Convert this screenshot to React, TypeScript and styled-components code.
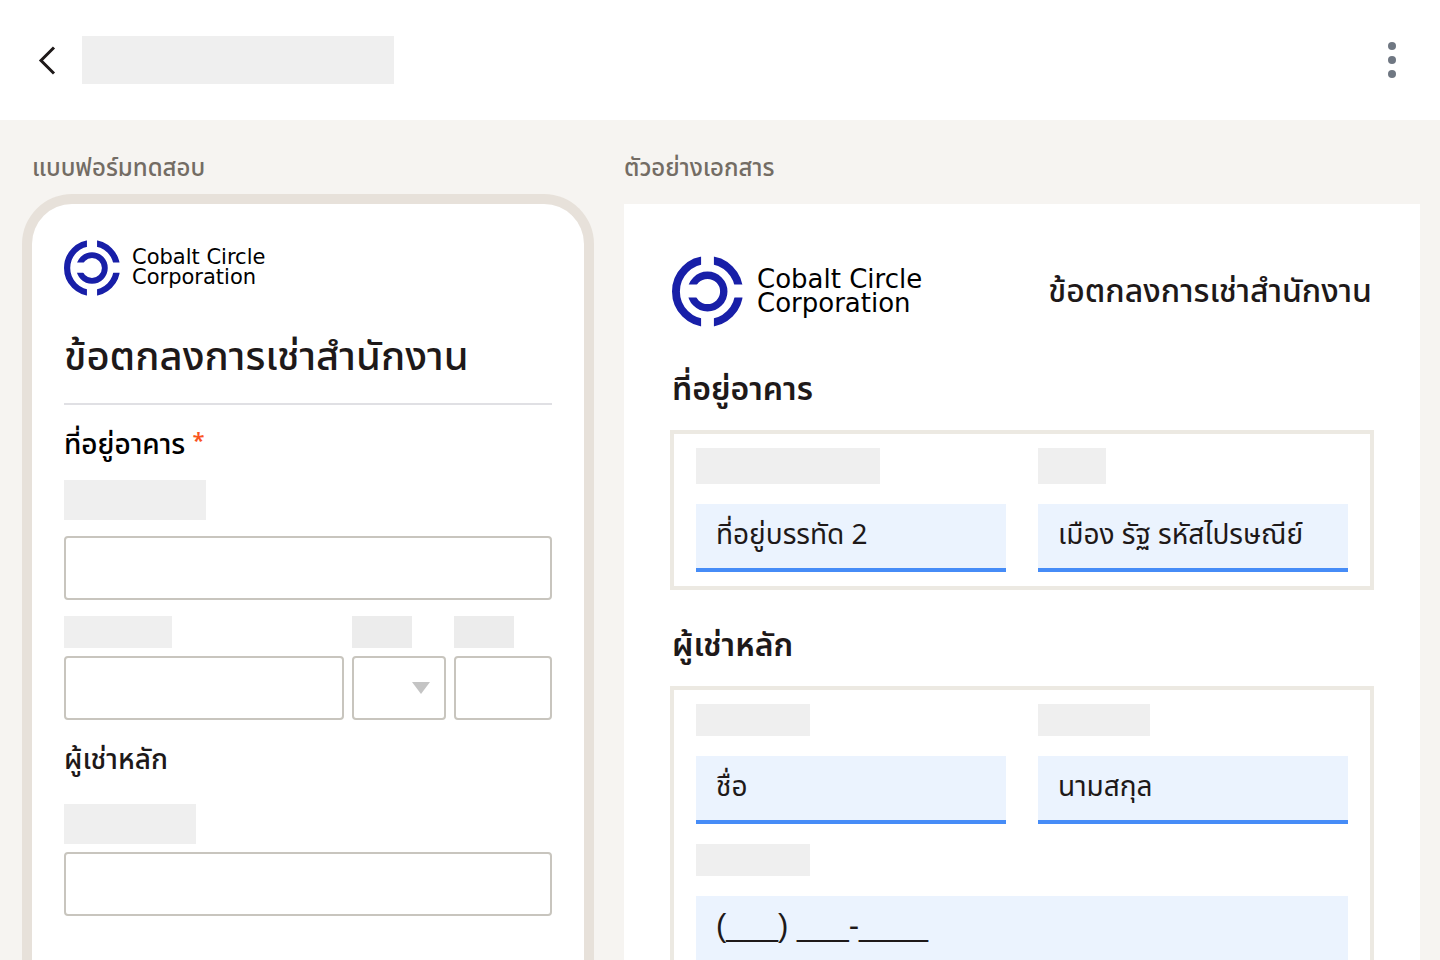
import React from 'react';
import styled, { createGlobalStyle } from 'styled-components';

const GlobalStyle = createGlobalStyle`
  *, *::before, *::after { box-sizing: border-box; }
  body {
    margin: 0;
    background: #f6f4f1;
    color: #1e1919;
    font-family: 'Noto Sans Thai', 'Noto Sans', sans-serif;
  }
`;

const Shell = styled.div`
  display: flex;
  flex-direction: column;
  height: 100vh;
`;

const TopBar = styled.header`
  flex: none;
  display: flex;
  align-items: center;
  height: 120px;
  padding: 0 40px 0 32px;
  background: #fff;
`;

const IconButton = styled.button`
  display: flex;
  align-items: center;
  justify-content: center;
  height: 48px;
  padding: 0;
  border: 0;
  background: none;
  cursor: pointer;
`;

const BackButton = styled(IconButton)`
  width: 32px;
  margin-right: 18px;
`;

const MenuButton = styled(IconButton)`
  width: 16px;
  margin-left: auto;
`;

const Block = styled.div<{ $w: number; $h: number }>`
  width: ${(p) => p.$w}px;
  max-width: 100%;
  height: ${(p) => p.$h}px;
  background: #efefef;
`;

const BlockLabel = styled.label<{ $w: number; $h: number; $gap: number; $dark?: boolean }>`
  display: block;
  width: ${(p) => p.$w}px;
  max-width: 100%;
  height: ${(p) => p.$h}px;
  margin-bottom: ${(p) => p.$gap}px;
  background: ${(p) => (p.$dark ? '#ececec' : '#efefef')};
`;

const Workspace = styled.main`
  flex: 1;
  min-height: 0;
  display: grid;
  grid-template-columns: minmax(0, 572fr) minmax(0, 796fr);
  gap: 30px;
  padding: 32px 20px 0 22px;
  overflow: auto;
  scrollbar-width: none;
`;

const Column = styled.section`
  display: flex;
  flex-direction: column;
`;

const ColumnTitle = styled.h2<{ $indent?: boolean }>`
  margin: 0;
  padding-left: ${(p) => (p.$indent ? 10 : 0)}px;
  font-size: 24px;
  line-height: 34px;
  font-weight: 500;
  color: #736c64;
`;

const Phone = styled.form`
  flex: 1;
  margin-top: 8px;
  padding: 36px 32px 48px;
  border: 10px solid #e7e1da;
  border-bottom: 0;
  border-radius: 50px 50px 0 0;
  background: #fff;
`;

const Sheet = styled.form`
  flex: 1;
  margin-top: 18px;
  padding: 52px 46px 0;
  background: #fff;
`;

const Brand = styled.div<{ $large?: boolean }>`
  display: flex;
  align-items: center;
  gap: ${(p) => (p.$large ? 14 : 12)}px;
  color: #000;
  font-family: 'DejaVu Sans', sans-serif;
  font-size: ${(p) => (p.$large ? 26 : 21)}px;
  line-height: ${(p) => (p.$large ? 24 : 20)}px;
  white-space: nowrap;

  svg {
    flex: none;
    width: ${(p) => (p.$large ? 71 : 56)}px;
    height: ${(p) => (p.$large ? 71 : 56)}px;
  }
`;

const BrandName = styled.div`
  padding-bottom: 2px;
`;

const BrandLine = styled.div``;

const FormTitle = styled.h1`
  margin: 32px 0 0;
  padding-bottom: 15px;
  border-bottom: 2px solid #e0e0e4;
  font-size: 40px;
  line-height: 60px;
  font-weight: 500;
`;

const FormHeading = styled.h3<{ $gap: number; $strong?: boolean }>`
  margin: 21px 0 ${(p) => p.$gap}px;
  font-size: 28px;
  line-height: 40px;
  font-weight: 500;
  color: ${(p) => (p.$strong ? '#000' : '#1e1919')};
`;

const Required = styled.span`
  color: #fa551e;
  font-size: 22px;
  line-height: 1;
  font-weight: 600;
  vertical-align: 6px;
`;

const TextInput = styled.input`
  display: block;
  width: 100%;
  height: 64px;
  padding: 0 16px;
  border: 2px solid #c8c5be;
  border-radius: 4px;
  background: #fff;
  font: inherit;
  font-size: 28px;
`;

const SelectWrap = styled.div`
  display: grid;
  align-items: center;

  > * { grid-area: 1 / 1; }

  svg {
    justify-self: end;
    margin-right: 16px;
    pointer-events: none;
  }
`;

const Select = styled.select`
  width: 100%;
  height: 64px;
  padding: 0 16px;
  border: 2px solid #c8c5be;
  border-radius: 4px;
  background: #fff;
  font: inherit;
  appearance: none;
`;

const CityRow = styled.div`
  display: grid;
  grid-template-columns: minmax(0, 280fr) minmax(0, 94fr) minmax(0, 98fr);
  gap: 8px;
  margin-top: 16px;
`;

const SheetHeader = styled.div`
  display: flex;
  align-items: center;
  justify-content: space-between;
  padding: 0 2px 7px;
`;

const SheetTitle = styled.h1`
  margin: 0;
  font-size: 32px;
  line-height: 48px;
  font-weight: 500;
`;

const SheetHeading = styled.h3`
  margin: 32px 0 16px;
  padding-left: 2px;
  font-size: 32px;
  line-height: 48px;
  font-weight: 600;
`;

const FieldBox = styled.div`
  display: grid;
  grid-template-columns: 1fr 1fr;
  gap: 20px 32px;
  padding: 14px 22px;
  border: 4px solid #ece9e2;
`;

const Cell = styled.div<{ $wide?: boolean }>`
  grid-column: ${(p) => (p.$wide ? '1 / -1' : 'auto')};
  min-width: 0;
`;

const FilledInput = styled.input`
  display: block;
  width: 100%;
  height: 68px;
  padding: 0 20px 2px;
  border: 0;
  border-bottom: 4px solid #468cf7;
  border-radius: 0;
  background: #ebf3fe;
  color: #1e1919;
  font: inherit;
  font-size: 28px;
`;

const MaskInput = styled(FilledInput)`
  padding-bottom: 4px;
  font-family: 'Liberation Sans', sans-serif;
  font-size: 31px;
`;

function Logo() {
  return (
    <svg viewBox="0 0 72 72" aria-hidden="true">
      <defs>
        <clipPath id="ring-gaps">
          <path d="M0 0H29.5V72H0ZM42.5 0H72V29H42.5ZM42.5 42H72V72H42.5Z" />
        </clipPath>
        <clipPath id="core-gap">
          <path d="M10 10H62V62H10V42H36V29H10Z" />
        </clipPath>
      </defs>
      <circle cx="36" cy="36" r="32" fill="none" stroke="#181fa8" strokeWidth="8" clipPath="url(#ring-gaps)" />
      <circle cx="36" cy="36" r="16.5" fill="none" stroke="#181fa8" strokeWidth="7.5" clipPath="url(#core-gap)" />
    </svg>
  );
}

function BrandMark({ large }: { large?: boolean }) {
  return (
    <Brand $large={large}>
      <Logo />
      <BrandName>
        <BrandLine>Cobalt Circle</BrandLine>
        <BrandLine>Corporation</BrandLine>
      </BrandName>
    </Brand>
  );
}

type FieldProps = {
  id: string;
  name: string;
  w: number;
  h: number;
  gap: number;
};

function FormField({ id, name, w, h, gap, dark }: FieldProps & { dark?: boolean }) {
  return (
    <div>
      <BlockLabel htmlFor={id} $w={w} $h={h} $gap={gap} $dark={dark} />
      <TextInput id={id} aria-label={name} />
    </div>
  );
}

type SheetFieldProps = FieldProps & { value: string; wide?: boolean; mask?: boolean };

function SheetField({ id, name, value, w, h, gap, wide, mask }: SheetFieldProps) {
  const Input = mask ? MaskInput : FilledInput;
  return (
    <Cell $wide={wide}>
      <BlockLabel htmlFor={id} $w={w} $h={h} $gap={gap} />
      <Input id={id} aria-label={name} defaultValue={value} />
    </Cell>
  );
}

export default function App() {
  return (
    <Shell>
      <GlobalStyle />
      <TopBar>
        <BackButton type="button" aria-label="ย้อนกลับ">
          <svg width="32" height="32" viewBox="0 0 32 32" fill="none" stroke="#1e1919" strokeWidth="3">
            <path d="M22 3.5L9 16.5L22 29.5" />
          </svg>
        </BackButton>
        <Block $w={312} $h={48} />
        <MenuButton type="button" aria-label="เมนู">
          <svg width="16" height="40" viewBox="0 0 16 40" fill="#6f7782">
            <circle cx="8" cy="6" r="4" />
            <circle cx="8" cy="20" r="4" />
            <circle cx="8" cy="34" r="4" />
          </svg>
        </MenuButton>
      </TopBar>
      <Workspace>
        <Column>
          <ColumnTitle $indent>แบบฟอร์มทดสอบ</ColumnTitle>
          <Phone>
            <BrandMark />
            <FormTitle>ข้อตกลงการเช่าสำนักงาน</FormTitle>
            <FormHeading $gap={14} $strong>
              ที่อยู่อาคาร <Required>*</Required>
            </FormHeading>
            <FormField id="street" name="ที่อยู่" w={142} h={40} gap={16} />
            <CityRow>
              <FormField id="city" name="เมือง" w={108} h={32} gap={8} />
              <div>
                <BlockLabel htmlFor="state" $w={60} $h={32} $gap={8} $dark />
                <SelectWrap>
                  <Select id="state" aria-label="รัฐ" />
                  <svg width="18" height="12" viewBox="0 0 18 12" fill="#c4c4c4">
                    <path d="M0 0H18L9 12Z" />
                  </svg>
                </SelectWrap>
              </div>
              <FormField id="zip" name="รหัสไปรษณีย์" w={60} h={32} gap={8} dark />
            </CityRow>
            <FormHeading $gap={23}>ผู้เช่าหลัก</FormHeading>
            <FormField id="tenant" name="ผู้เช่าหลัก" w={132} h={40} gap={8} />
          </Phone>
        </Column>
        <Column>
          <ColumnTitle>ตัวอย่างเอกสาร</ColumnTitle>
          <Sheet>
            <SheetHeader>
              <BrandMark large />
              <SheetTitle>ข้อตกลงการเช่าสำนักงาน</SheetTitle>
            </SheetHeader>
            <SheetHeading>ที่อยู่อาคาร</SheetHeading>
            <FieldBox>
              <SheetField id="line2" name="ที่อยู่บรรทัด 2" value="ที่อยู่บรรทัด 2" w={184} h={36} gap={20} />
              <SheetField id="cityline" name="เมือง รัฐ รหัสไปรษณีย์" value="เมือง รัฐ รหัสไปรษณีย์" w={68} h={36} gap={20} />
            </FieldBox>
            <SheetHeading>ผู้เช่าหลัก</SheetHeading>
            <FieldBox>
              <SheetField id="first" name="ชื่อ" value="ชื่อ" w={114} h={32} gap={20} />
              <SheetField id="last" name="นามสกุล" value="นามสกุล" w={112} h={32} gap={20} />
              <SheetField id="phone" name="โทรศัพท์" value="(___) ___-____" w={114} h={32} gap={20} wide mask />
            </FieldBox>
          </Sheet>
        </Column>
      </Workspace>
    </Shell>
  );
}
